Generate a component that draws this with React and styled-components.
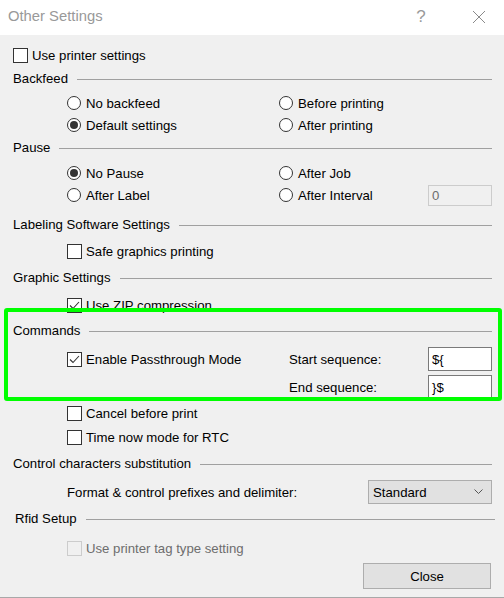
import React from 'react';
import styled, { createGlobalStyle } from 'styled-components';

const GlobalStyle = createGlobalStyle`
    html, body {
        margin: 0;
        padding: 0;
        background: #ffffff;
    }
    body {
        font-family: "Liberation Sans", Arial, sans-serif;
        font-size: 13.2px;
        color: #000000;
    }
`

const Window = styled.div`
    width: 504px;
    height: 598px;
    display: flex;
    flex-direction: column;
    background: #f0f0f0;
    overflow: hidden;
`

const TitleBar = styled.div`
    height: 35px;
    flex: none;
    background: #ffffff;
    display: flex;
    align-items: center;
    padding-left: 8px;
    color: #999999;
    font-size: 14.8px;
`

const TitleText = styled.div`
    flex: 1;
    padding-bottom: 3px;
`

const TitleButton = styled.div`
    width: 50px;
    height: 35px;
    margin-right: ${p => p.$gap || 0}px;
    display: flex;
    align-items: center;
    justify-content: center;
    color: #9a9a9a;
    font-size: 17px;
    padding-bottom: 2px;
    box-sizing: border-box;
`

const Body = styled.div`
    flex: 1;
    display: flex;
    flex-direction: column;
    padding: 9px 12px 0 13px;
    border-bottom: 1px solid #a8a8a8;
`

const Row = styled.div`
    height: ${p => p.$h || 22}px;
    margin-top: ${p => p.$mt || 0}px;
    padding-left: ${p => p.$indent || 0}px;
    display: flex;
    align-items: center;
    flex: none;
`

const Cell = styled.div`
    width: ${p => p.$w}px;
    flex: none;
    display: flex;
    align-items: center;
`

const Header = styled.div`
    height: 22px;
    margin-top: ${p => p.$mt || 0}px;
    padding-left: ${p => p.$shift || 0}px;
    margin-right: ${p => p.$extend ? -3 : 0}px;
    display: flex;
    align-items: center;
    flex: none;
`

const Rule = styled.div`
    flex: 1;
    height: 1px;
    margin-left: 9px;
    margin-top: 2px;
    background: #a0a0a0;
`

const Highlight = styled.div`
    position: relative;
    display: flex;
    flex-direction: column;

    &::after {
        content: "";
        position: absolute;
        left: -9px;
        right: -10px;
        top: -8px;
        bottom: -3px;
        border: 4px solid #00ff00;
        border-radius: 3px;
        pointer-events: none;
    }
`

const Choice = styled.label`
    display: flex;
    align-items: center;
    gap: ${p => p.$radio ? 5 : 4}px;
    color: ${p => p.$disabled ? '#6d6d6d' : '#000000'};
    white-space: nowrap;
`

const Box = styled.span`
    width: 15px;
    height: 15px;
    box-sizing: border-box;
    border: 1px solid ${p => p.$disabled ? '#cccccc' : '#333333'};
    background: ${p => p.$disabled ? '#f0f0f0' : '#ffffff'};
    display: flex;
    align-items: center;
    justify-content: center;
`

const Radio = styled.span`
    width: 14px;
    height: 14px;
    box-sizing: border-box;
    border: 1px solid #333333;
    border-radius: 50%;
    background: #ffffff;
    display: flex;
    align-items: center;
    justify-content: center;

    &::after {
        content: "";
        width: 8px;
        height: 8px;
        border-radius: 50%;
        background: ${p => p.$on ? '#333333' : 'transparent'};
    }
`

const TextField = styled.div`
    width: 64px;
    height: ${p => p.$h || 24}px;
    box-sizing: border-box;
    border: 1px solid ${p => p.$disabled ? '#cccccc' : '#7a7a7a'};
    background: ${p => p.$disabled ? '#f0f0f0' : '#ffffff'};
    color: ${p => p.$disabled ? '#6d6d6d' : '#000000'};
    padding-left: 3px;
    display: flex;
    align-items: center;
    margin-left: auto;
`

const Select = styled.div`
    width: 124px;
    height: 24px;
    box-sizing: border-box;
    border: 1px solid #adadad;
    background: #e1e1e1;
    padding: 0 8px 0 4px;
    display: flex;
    align-items: center;
    justify-content: space-between;
    margin-left: auto;
`

const Button = styled.button`
    width: 128px;
    height: 26px;
    box-sizing: border-box;
    border: 1px solid #adadad;
    background: #e1e1e1;
    font-family: inherit;
    font-size: 13.2px;
    color: #000000;
    margin-left: auto;
    margin-right: 1px;
    padding: 0;
`

function CheckBox({ checked, disabled, children }) {
    return <Choice $disabled={disabled}>
        <Box $disabled={disabled}>
            {checked && (
                <svg width="13" height="13" viewBox="0 0 13 13">
                    <path d="M2 6.5 L5 9.5 L11 3" fill="none" stroke="#333" strokeWidth="1.1" />
                </svg>
            )}
        </Box>
        {children}
    </Choice>
}

function RadioButton({ on, children }) {
    return <Choice $radio>
        <Radio $on={on} />
        {children}
    </Choice>
}

function Section({ title, mt, shift, extend }) {
    return <Header $mt={mt} $shift={shift} $extend={extend}>
        {title}
        <Rule />
    </Header>
}

export default function App() {
    return <>
        <GlobalStyle />
        <Window>
            <TitleBar>
                <TitleText>Other Settings</TitleText>
                <TitleButton $gap={8}>?</TitleButton>
                <TitleButton>
                    <svg width="14" height="14" viewBox="0 0 14 14">
                        <path d="M1 1 L13 13 M13 1 L1 13" stroke="#8a8a8a" strokeWidth="1" />
                    </svg>
                </TitleButton>
            </TitleBar>
            <Body>
                <Row>
                    <CheckBox>Use printer settings</CheckBox>
                </Row>

                <Section title="Backfeed" mt={1} />
                <Row $mt={3} $indent={54}>
                    <Cell $w={212}><RadioButton>No backfeed</RadioButton></Cell>
                    <RadioButton>Before printing</RadioButton>
                </Row>
                <Row $indent={54}>
                    <Cell $w={212}><RadioButton on>Default settings</RadioButton></Cell>
                    <RadioButton>After printing</RadioButton>
                </Row>

                <Section title="Pause" />
                <Row $mt={4} $indent={54}>
                    <Cell $w={212}><RadioButton on>No Pause</RadioButton></Cell>
                    <RadioButton>After Job</RadioButton>
                </Row>
                <Row $indent={54}>
                    <Cell $w={212}><RadioButton>After Label</RadioButton></Cell>
                    <RadioButton>After Interval</RadioButton>
                    <TextField $disabled $h={21}>0</TextField>
                </Row>

                <Section title="Labeling Software Settings" mt={7} />
                <Row $mt={5} $indent={54}>
                    <CheckBox>Safe graphics printing</CheckBox>
                </Row>

                <Section title="Graphic Settings" mt={4} />
                <Row $mt={6} $indent={54}>
                    <CheckBox checked>Use ZIP compression</CheckBox>
                </Row>

                <Highlight>
                    <Section title="Commands" mt={3} />
                    <Row $mt={7} $indent={54}>
                        <Cell $w={222}><CheckBox checked>Enable Passthrough Mode</CheckBox></Cell>
                        Start sequence:
                        <TextField>{'${'}</TextField>
                    </Row>
                    <Row $mt={6} $indent={276}>
                        End sequence:
                        <TextField>{'}$'}</TextField>
                    </Row>
                </Highlight>

                <Row $mt={4} $indent={54}>
                    <CheckBox>Cancel before print</CheckBox>
                </Row>
                <Row $mt={2} $indent={54}>
                    <CheckBox>Time now mode for RTC</CheckBox>
                </Row>

                <Section title="Control characters substitution" mt={4} />
                <Row $mt={6} $indent={54} $h={24}>
                    Format &amp; control prefixes and delimiter:
                    <Select>
                        Standard
                        <svg width="9" height="6" viewBox="0 0 9 6">
                            <path d="M0.5 0.5 L4.5 4.5 L8.5 0.5" fill="none" stroke="#555" strokeWidth="1" />
                        </svg>
                    </Select>
                </Row>

                <Section title="Rfid Setup" mt={3} shift={2} extend />
                <Row $mt={8} $indent={54}>
                    <CheckBox disabled>Use printer tag type setting</CheckBox>
                </Row>

                <Row $mt={4} $h={26}>
                    <Button>Close</Button>
                </Row>
            </Body>
        </Window>
    </>
}
